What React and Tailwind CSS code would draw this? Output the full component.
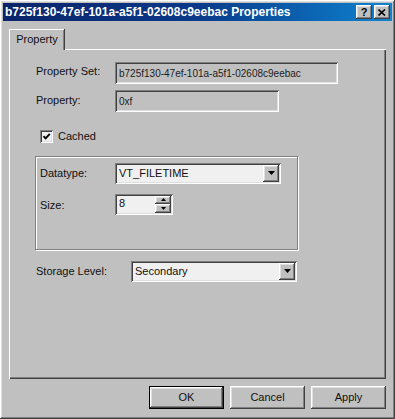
const raised =
  'shadow-[inset_-1px_-1px_#404040,inset_1px_1px_#ffffff,inset_-2px_-2px_#808080,inset_2px_2px_#dfdfdf]';
const sunken =
  'shadow-[inset_1px_1px_#808080,inset_-1px_-1px_#ffffff,inset_2px_2px_#404040,inset_-2px_-2px_#dfdfdf]';

const DropArrow = () => (
  <div className={`w-[16px] h-full bg-[#c0c0c0] flex items-center justify-center ${raised}`}>
    <svg width="7" height="4" viewBox="0 0 7 4">
      <path d="M0 0h7L3.5 4z" fill="#000" />
    </svg>
  </div>
);

const Combo = ({ value, width }) => (
  <div className={`h-[21px] ${width} bg-[#f0f0f0] p-[2px] flex ${sunken}`}>
    <span className="flex-1 pl-[2px] leading-[17px]">{value}</span>
    <DropArrow />
  </div>
);

const ReadOnlyField = ({ value, width }) => (
  <div className={`h-[22px] ${width} bg-[#c0c0c0] px-[4px] flex items-center ${sunken}`}>
    <span className="text-[10px] text-[#202020]">{value}</span>
  </div>
);

const DialogButton = ({ label, isDefault }) =>
  isDefault ? (
    <div className="w-[75px] h-[23px] border border-black">
      <div className={`w-full h-full flex items-center justify-center ${raised}`}>{label}</div>
    </div>
  ) : (
    <div className={`w-[75px] h-[23px] flex items-center justify-center ${raised}`}>{label}</div>
  );

export default function App() {
  return (
    <div
      className={`w-[395px] h-[419px] bg-[#c0c0c0] p-[3px] flex flex-col text-[11px] text-[#101010] font-['Liberation_Sans',Arial,sans-serif] ${raised}`}
    >
      {/* title bar */}
      <div className="h-[18px] flex items-center pl-[2px] pr-[2px] bg-gradient-to-r from-[#0a246a] via-[#0a3a8a] to-[#1084d0]">
        <span className="text-white font-bold text-[12px]">
          b725f130-47ef-101a-a5f1-02608c9eebac Properties
        </span>
        <div className="ml-auto flex gap-[2px]">
          <div className={`w-[16px] h-[14px] bg-[#c0c0c0] flex items-center justify-center font-bold text-[11px] leading-none text-black ${raised}`}>
            ?
          </div>
          <div className={`w-[16px] h-[14px] bg-[#c0c0c0] flex items-center justify-center ${raised}`}>
            <svg width="8" height="7" viewBox="0 0 8 7">
              <path d="M0.5 0.5L7 6.5M7 0.5L0.5 6.5" stroke="#000" strokeWidth="1.6" />
            </svg>
          </div>
        </div>
      </div>

      {/* tab strip */}
      <div className="mt-[8px] ml-[6px] flex">
        <div className="relative z-10 -mb-px w-[55px] h-[21px] bg-[#c0c0c0] border-t border-l border-white shadow-[inset_-1px_0_#808080,1px_0_#404040] flex items-center justify-center pb-[1px]">
          Property
        </div>
      </div>

      {/* tab panel */}
      <div className="ml-[6px] w-[377px] h-[330px] flex flex-col pt-[13px] shadow-[inset_1px_1px_#ffffff,inset_-1px_-1px_#404040,inset_-2px_-2px_#808080]">
        <div className="flex items-center">
          <span className="ml-[27px] w-[79px] -mt-[3px]">Property Set:</span>
          <ReadOnlyField value="b725f130-47ef-101a-a5f1-02608c9eebac" width="w-[223px]" />
        </div>
        <div className="flex items-center mt-[6px]">
          <span className="ml-[27px] w-[79px] -mt-[1px]">Property:</span>
          <ReadOnlyField value="0xf" width="w-[164px]" />
        </div>

        <div className="flex items-center mt-[16px] ml-[31px]">
          <div className={`w-[13px] h-[13px] bg-[#f0f0f0] flex items-center justify-center ${sunken}`}>
            <svg width="9" height="9" viewBox="0 0 9 9">
              <path d="M1.5 4.2L3.6 6.4L7.8 1.8" stroke="#000" strokeWidth="1.9" fill="none" />
            </svg>
          </div>
          <span className="ml-[5px]">Cached</span>
        </div>

        {/* group box */}
        <div className="mt-[11px] ml-[26px] w-[263px] h-[94px] border border-[#808080] shadow-[inset_1px_1px_#ffffff,1px_1px_#ffffff] flex flex-col pt-[6px]">
          <div className="flex items-center">
            <span className="ml-[4px] w-[75px]">Datatype:</span>
            <Combo value="VT_FILETIME" width="w-[166px]" />
          </div>
          <div className="flex items-center mt-[10px]">
            <span className="ml-[4px] w-[75px] mt-[3px]">Size:</span>
            <div className={`h-[21px] w-[58px] bg-[#f0f0f0] p-[2px] flex ${sunken}`}>
              <span className="flex-1 pl-[2px] leading-[15px]">8</span>
              <div className="w-[16px] flex flex-col">
                <div className={`flex-1 bg-[#c0c0c0] flex items-center justify-center ${raised}`}>
                  <svg width="5" height="3" viewBox="0 0 5 3">
                    <path d="M2.5 0L5 3H0z" fill="#000" />
                  </svg>
                </div>
                <div className={`flex-1 bg-[#c0c0c0] flex items-center justify-center ${raised}`}>
                  <svg width="5" height="3" viewBox="0 0 5 3">
                    <path d="M0 0h5L2.5 3z" fill="#000" />
                  </svg>
                </div>
              </div>
            </div>
          </div>
        </div>

        <div className="flex items-center mt-[11px]">
          <span className="ml-[27px] w-[95px]">Storage Level:</span>
          <Combo value="Secondary" width="w-[166px]" />
        </div>
      </div>

      {/* dialog buttons */}
      <div className="mt-[7px] ml-[6px] w-[377px] flex justify-end gap-[6px]">
        <DialogButton label="OK" isDefault />
        <DialogButton label="Cancel" />
        <DialogButton label="Apply" />
      </div>
    </div>
  );
}
